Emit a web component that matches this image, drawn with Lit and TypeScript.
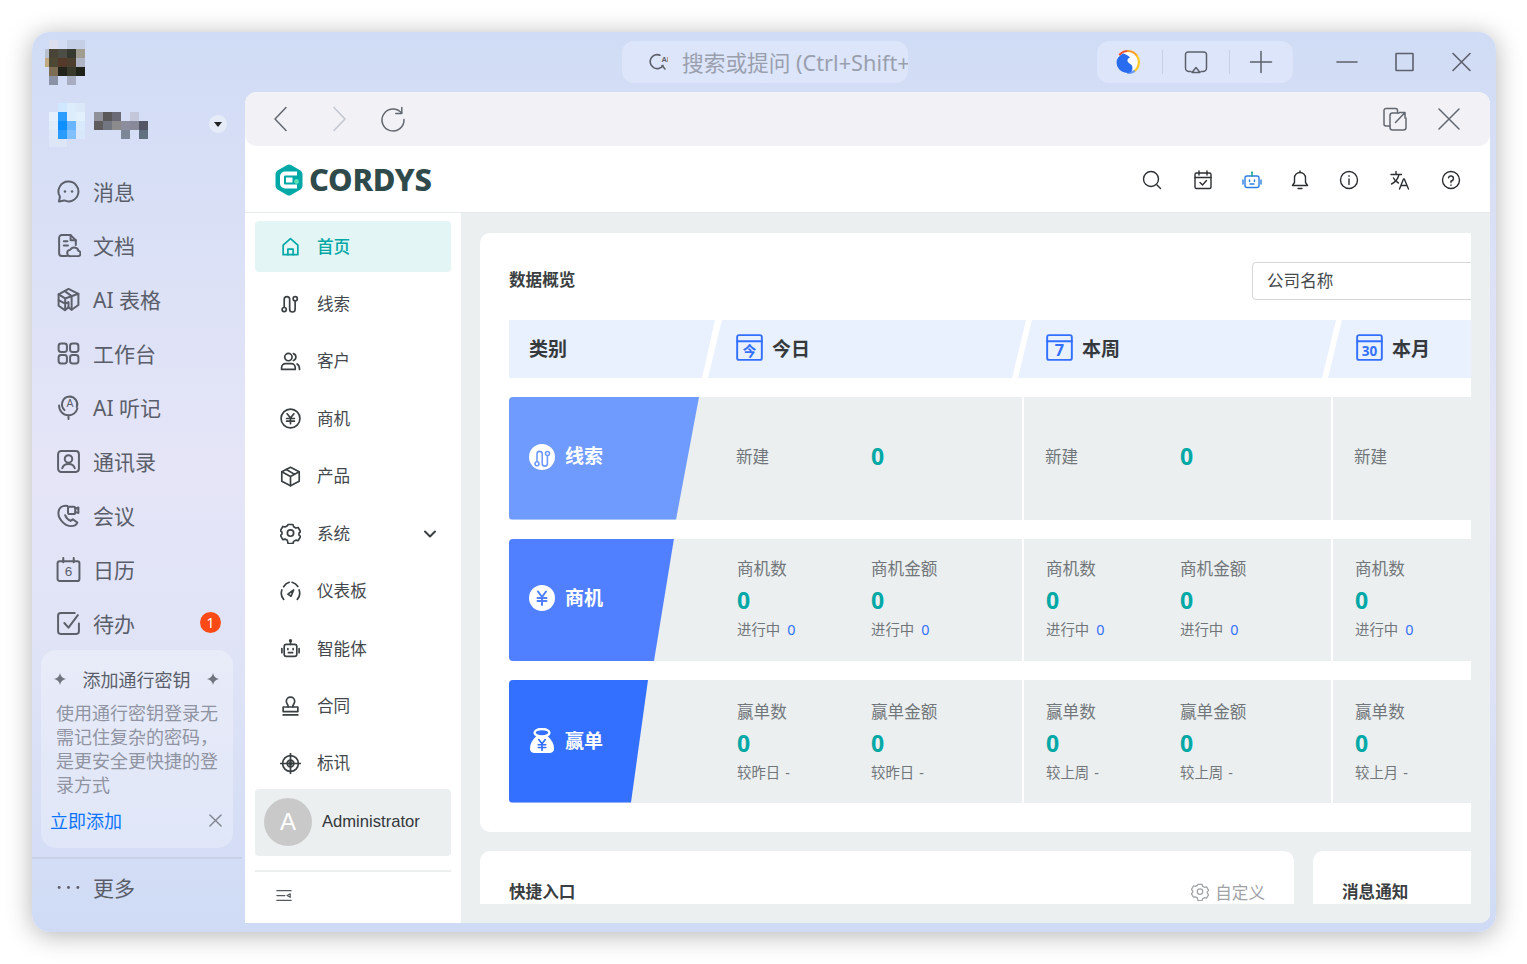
import { LitElement, html, css, svg, nothing } from 'lit';
import { customElement } from 'lit/decorators.js';

// stroke icons, 24 box for the left rail, 20 box for the app menu
const rail: Record<string, unknown> = {
  msg: svg`<path d="M12 2.5a9.5 9.5 0 1 1-4 18.1l-5.2 1 1-4.6A9.5 9.5 0 0 1 12 2.5z"/><circle cx="8.6" cy="12" r="1.2" fill="currentColor" stroke="none"/><circle cx="15.4" cy="12" r="1.2" fill="currentColor" stroke="none"/>`,
  doc: svg`<path d="M10.5 22H5.5A2.5 2.5 0 0 1 3 19.5v-15A2.5 2.5 0 0 1 5.5 2H14l5 5v4.5"/><path d="M14 2v5h5M7.5 8h3.5M7.5 12h4"/><path d="M14 22.2a3 3 0 0 1-.4-6 4.3 4.3 0 0 1 8 1 2.6 2.6 0 0 1 .1 5z"/>`,
  table: svg`<path d="M12 1.8 21.5 6.5v10.8L15 21.8l-3-2.2-3.5 2.6L2.5 18V7z"/><path d="M2.5 7 8.8 11v11M8.8 11l12.7-4.5M15 8.8v13M8.5 4l6.5 4.8M2.5 12.5l6.3 3.5 3.2-1.5v5"/>`,
  work: svg`<rect x="2.5" y="2.5" width="8" height="8" rx="2.4"/><rect x="13.5" y="2.5" width="8" height="8" rx="2.4"/><rect x="2.5" y="13.5" width="8" height="8" rx="2.4"/><rect x="13.5" y="13.5" width="8" height="8" rx="2.4"/>`,
  asr: svg`<path d="M8.2 14.5A7.5 7.5 0 0 1 13 1.5a7.5 7.5 0 0 1 7 10"/><path d="M3 10a9 9 0 0 0 9 9.5 8.8 8.8 0 0 0 8.5-6.5M12 19.5V23"/><text x="13.5" y="11.5" font-size="10" font-family="Liberation Sans" text-anchor="middle" fill="currentColor" stroke="none">A</text>`,
  contact: svg`<rect x="2" y="2" width="20" height="20" rx="3"/><circle cx="12" cy="9.5" r="3.6"/><path d="M6 18.5c.8-2.6 3-4 6-4s5.2 1.4 6 4"/>`,
  meet: svg`<path d="M11 2.8C6.5 1.8 2.3 4.5 2.3 9.5c0 6 6.2 12.7 12.2 12.7 2.5 0 5.2-1.2 6-3.500l-4.300-3-2.200 1.500c-2-.8-4.500-3.500-5.200-5.500"/><rect x="11.500" y="3.500" width="7" height="7" rx="1.500"/><path d="m18.500 5.500 3-1.200v5.400l-3-1.200"/>`,
  cal: svg`<rect x="1.5" y="4" width="21" height="19" rx="2"/><path d="M7 1v4M17 1v4"/><text x="12" y="18.500" font-size="13" font-family="Liberation Sans" text-anchor="middle" fill="currentColor" stroke="none">6</text>`,
  todo: svg`<path d="M22 12v7.500a2.500 2.500 0 0 1-2.500 2.500h-15A2.500 2.500 0 0 1 2 19.500v-15A2.500 2.500 0 0 1 4.500 2H18"/><path d="m8 11.500 4 4.500 9-12"/>`,
  more: svg`<circle cx="3" cy="12" r="1.4" fill="currentColor" stroke="none"/><circle cx="12" cy="12" r="1.4" fill="currentColor" stroke="none"/><circle cx="21" cy="12" r="1.4" fill="currentColor" stroke="none"/>`,
};

const gear = svg`<path d="M7.7 1.800h4.600l.7 2.200 2.100 1.200 2.200-.5 2.300 4-1.500 1.300v1.900l1.500 1.300-2.300 4-2.200-.5-2.100 1.200-.7 2.200H7.700L7 16.900l-2.100-1.200-2.200.5-2.300-4L1.900 10.900V9L.4 7.700l2.300-4 2.200.5L7 3z" transform="translate(0 -.4)"/><circle cx="10" cy="9.6" r="3"/>`;
const clue = svg`<path d="M4 13.500V6a2.600 2.600 0 0 1 5.200 0v9.500a2.600 2.600 0 0 0 5.200 0V8"/><circle cx="4" cy="15.800" r="2"/><circle cx="14.500" cy="5.500" r="2"/>`;

const menu: Record<string, unknown> = {
  home: svg`<path d="M3 8.800 10 2.500l7 6.300v9H3z"/><path d="M7.500 17.800v-5.300h5v5.300"/>`,
  clue,
  customer: svg`<circle cx="8" cy="5.800" r="3.500"/><path d="M1.500 17.500v-1.800A3.700 3.700 0 0 1 5.200 12h5.600a3.700 3.700 0 0 1 3.700 3.700v1.800z"/><path d="M12.800 2.500a3.500 3.500 0 0 1 0 6.600M16.300 12.300c1.500.8 2.300 2.300 2.300 5.200"/>`,
  money: svg`<circle cx="10" cy="10" r="9"/><path d="M6.800 5.500 10 9.500l3.200-4M6.300 10h7.400M6.300 12.500h7.400M10 9.500V15"/>`,
  product: svg`<path d="M10 1.300 18.300 5.500v9L10 18.700l-8.300-4.200v-9z"/><path d="M1.700 5.500 10 10l8.300-4.500M10 10v8.700M6 3.300 14 8"/>`,
  setting: gear,
  dash: svg`<path d="M3.500 17.500A9 9 0 0 1 1.800 8.500M3.500 5.500A9 9 0 0 1 8.800 1.200M11.500 1.200a9 9 0 0 1 5.500 4M18.200 8.500a9 9 0 0 1-1.700 9"/><path d="m7.500 12.500 5.500-4-2.500 6z"/>`,
  agent: svg`<rect x="4" y="6" width="12" height="11.500" rx="2"/><path d="M10 6V3.500M1.800 10v4M18.200 10v4M7.500 10v1M12.500 10v1M8 14h4"/><circle cx="10" cy="2.500" r=".8"/>`,
  contract: svg`<path d="M7.800 10.500c.4-2.200-1.800-3-1.800-5.500a4 4 0 0 1 8 0c0 2.500-2.200 3.300-1.800 5.500"/><path d="M3 10.500h14v4.300H3zM3 18h14"/>`,
  tender: svg`<circle cx="10" cy="10" r="7.500"/><circle cx="10" cy="10" r="3.200"/><path d="M10 0v20M0 10h20"/><circle cx="10" cy="10" r="1.300" fill="currentColor"/>`,
};

const dateIcon = (label: string, size: number) => html`<svg class="dicon" viewBox="0 0 28 28">
  <rect x="1.2" y="1.2" width="25.6" height="25.6" rx="2"/><path d="M1.2 7.500h25.600"/>
  <text x="14" y="23" font-size=${size} font-weight="700" text-anchor="middle">${label}</text>
</svg>`;

const mosaic = (rows: string[][], cell: number, offset = 0) =>
  rows.map((row, y) =>
    row.map((fill, x) =>
      fill
        ? svg`<rect x=${x * cell + offset} y=${y * cell} width=${cell} height=${cell} fill=${fill}/>`
        : nothing,
    ),
  );

const LOGO = [
  ['', '#dcdfee', '#d2ddf4', '#c5cfe5', '#c5cfe5'],
  ['#b8c0d0', '#4a4436', '#4c4d44', '#35392f', '#a09d90'],
  ['#c0a880', '#4d4833', '#55392a', '#4c3f2d', '#b0b5c5'],
  ['', '#7d6d55', '#22231b', '#3a3a2c', '#1e2218'],
  ['', '#8a93a5', '', '#a8aec2', ''],
];
const AVATAR = [
  ['', '#cfe8ff', '#dcecfa', '#dae8f8'],
  ['#e6f0fc', '#2a9dff', '#dcedfc', '#e2f0fd'],
  ['#e0ecfa', '#0d8fff', '#69b5ff', '#d8eafb'],
  ['#dfe8f8', '#2a9cff', '#80c0ff', '#d8e8fa'],
  ['#dde6f6', '#dde6f6', '', ''],
];
const NAME = [
  ['#8f9099', '#5a5858', '#6a6a76', '', '#c4c6da', ''],
  ['#5e5c5c', '#727680', '#8b8b8b', '#8c8e9e', '#888a9a', '#545668'],
  ['', '', '', '#7c8898', '', '#607080'],
];

const RAIL = [
  ['msg', '消息'], ['doc', '文档'], ['table', 'AI 表格'], ['work', '工作台'], ['asr', 'AI 听记'],
  ['contact', '通讯录'], ['meet', '会议'], ['cal', '日历'], ['todo', '待办'],
];
const MENU = [
  ['home', '首页'], ['clue', '线索'], ['customer', '客户'], ['money', '商机'], ['product', '产品'],
  ['setting', '系统'], ['dash', '仪表板'], ['agent', '智能体'], ['contract', '合同'], ['tender', '标讯'],
];

const statPair = (a: string, b: string, sub: string, valueBlue: boolean) => html`
  <div class="stat"><span>${a}</span><b>0</b><small>${sub}<i class=${valueBlue ? 'num' : ''}>${valueBlue ? '0' : '-'}</i></small></div>
  <div class="stat"><span>${b}</span><b>0</b><small>${sub}<i class=${valueBlue ? 'num' : ''}>${valueBlue ? '0' : '-'}</i></small></div>`;
const newOnly = html`<div class="single"><span>新建</span><b>0</b></div>`;

@customElement('app-root')
export class AppRoot extends LitElement {
  static styles = css`
    :host {
      display: block;
      height: 964px;
      box-sizing: border-box;
      padding: 32px 31px 32px 32px;
      background: #fff;
      font-family: 'Noto Sans', 'Noto Sans CJK SC', sans-serif;
      overflow: hidden;
    }
    * { box-sizing: border-box; }
    svg { display: block; flex: none; fill: none; stroke: currentColor; stroke-linecap: round; stroke-linejoin: round; }
    .flat { stroke: none; }
    .window {
      height: 900px;
      display: flex;
      border-radius: 18px;
      background: linear-gradient(#d0dcf5 0%, #e5e5f7 48%, #dfe3f6 70%, #cfdbf5 100%);
      box-shadow: 0 3px 26px rgba(0, 0, 0, 0.3);
      overflow: hidden;
    }
    .rail { width: 213px; flex: none; display: flex; flex-direction: column; }
    .rail-logo { padding: 8px 0 0 13px; height: 71px; }
    .org { display: flex; align-items: flex-start; height: 61px; padding-left: 17px; }
    .org .name { margin: 9px 0 0 9px; }
    .org .caret {
      width: 18px; height: 18px; margin: 12px 18px 0 auto; border-radius: 50%;
      background: #e6ebf8; display: flex; align-items: center; justify-content: center;
    }
    .org .caret::after { content: ''; border: 4px solid transparent; border-top: 5px solid #222; border-bottom: 0; }
    .rail-nav { display: flex; flex-direction: column; }
    .rail-item {
      height: 54px; display: flex; align-items: center; padding-left: 24px; gap: 12px;
      font-size: 21px; color: #5a5e6a; position: relative;
    }
    .rail-item svg { width: 25px; height: 25px; stroke-width: 1.9; color: #5c606b; }
    .badge {
      position: absolute; right: 24px; top: 16px; width: 21px; height: 21px; border-radius: 50%;
      background: #fb4a15; color: #fff; font-size: 14px; display: flex; align-items: center; justify-content: center;
    }
    .pass {
      margin: 0 12px 0 9px; height: 198px; padding: 15px 14px 0 15px; border-radius: 15px;
      background: rgba(255, 255, 255, 0.28); font-size: 18px;
    }
    .pass-title { display: flex; align-items: center; justify-content: space-between; margin-left: -2px; color: #5a5e6a; height: 28px; }
    .pass-title svg { width: 12px; height: 12px; fill: #70747f; stroke: none; }
    .pass p { margin: 8px 0 0; line-height: 24px; color: #9094a2; }
    .pass-foot { display: flex; justify-content: space-between; align-items: center; margin: 10px -3px 0 -6px; color: #0a74ff; }
    .pass-foot svg { width: 13px; height: 13px; color: #80858f; stroke-width: 1.5; }
    .rail-more { margin: 9px 3px 0 0; border-top: 2px solid #c8d1e7; }
    .rail-more .rail-item { height: 56px; }
    .main { flex: 1; min-width: 0; display: flex; flex-direction: column; padding: 0 6px 9px 0; }
    .titlebar { height: 60px; flex: none; display: flex; align-items: center; }
    .search {
      width: 286px; height: 42px; margin-left: 377px; border-radius: 12px; background: #dce5fa; overflow: hidden;
      display: flex; align-items: center; padding-left: 26px; gap: 14px; color: #9a9fae; font-size: 21.7px; white-space: nowrap;
    }
    .search span { padding-bottom: 2px; }
    .search svg { width: 20px; height: 20px; color: #5c606b; stroke-width: 1.6; }
    .pill {
      width: 196px; height: 42px; margin-left: 189px; border-radius: 12px; background: #dce5fa;
      display: grid; grid-template-columns: 65px 1px 66px 1px 63px; align-items: center; justify-items: center;
      color: #5c606b;
    }
    .pill hr { width: 1px; height: 24px; border: 0; margin: 0; background: #c6d0e6; }
    .pill svg { width: 26px; height: 26px; stroke-width: 1.5; }
    .pill .swirl { margin-right: 3px; stroke: none; }
    .pill .screen { margin-right: 1px; }
    .pill .plus { margin-right: 2px; }
    .winbtns { display: grid; grid-template-columns: repeat(3, 57px); justify-items: center; margin-left: 25px; color: #5c606b; }
    .winbtns svg { width: 22px; height: 22px; stroke-width: 1.6; }
    .panel { flex: 1; min-height: 0; display: flex; flex-direction: column; background: #fff; border-radius: 12px 12px 10px 0; overflow: hidden; }
    .toolbar { height: 54px; flex: none; background: #f1f1f6; border-radius: 12px; display: flex; align-items: center; padding: 0 27px 0 22px; color: #63676f; }
    .toolbar svg { width: 28px; height: 28px; stroke-width: 1.5; }
    .toolbar .off { color: #c3c6cf; margin-left: 30px; }
    .toolbar .reload { margin-left: 26px; }
    .toolbar .right { margin-left: auto; display: flex; gap: 26px; }
    .brandbar { height: 67px; flex: none; display: flex; align-items: center; padding: 1px 0 0 29px; border-bottom: 1px solid #e6eaeb; }
    .brand { display: flex; align-items: center; gap: 5px; font-weight: 800; font-size: 31px; letter-spacing: -0.3px; color: #2f4a4b; line-height: 1; }
    .brand svg { width: 30px; height: 32px; stroke: none; }
    .hicons { margin-left: auto; display: grid; grid-template-columns: 52px 50.5px 48px 48px 50px 51px 51px; justify-items: center; padding: 1px 14px 0 0; color: #2c2f33; }
    .hicons svg { width: 20px; height: 20px; stroke-width: 1.4; }
    .body { flex: 1; min-height: 0; display: flex; }
    .menu { width: 216px; flex: none; display: flex; flex-direction: column; padding: 8px 10px 0; }
    .menu-list { display: flex; flex-direction: column; gap: 6.44px; }
    .menu-item { height: 51px; display: flex; align-items: center; padding: 0 0 2px 25px; gap: 16px; font-size: 16.6px; color: #44484c; border-radius: 4px; }
    .menu-item svg { width: 21px; height: 21px; stroke-width: 1.6; color: #3a3f42; margin-top: 2px; }
    .menu-item.on { background: #e3f5f5; color: #00a8a6; font-weight: 500; }
    .menu-item.on svg { color: #00a8a6; }
    .menu-item .chev { margin-left: auto; margin-right: 14px; width: 14px; height: 14px; stroke-width: 2; }
    .user { height: 67px; border-radius: 4px; background: #ebeff0; display: flex; align-items: center; padding-left: 9px; gap: 10px; font: 16.6px 'Liberation Sans', sans-serif; color: #33373a; }
    .user .avatar { width: 48px; height: 48px; border-radius: 50%; background: #c9c9c9; color: #fff; font-size: 24px; display: flex; align-items: center; justify-content: center; }
    .collapse { margin-top: 14px; border-top: 2px solid #ebeff0; padding: 16px 0 0 21px; color: #55595c; }
    .collapse svg { width: 16px; height: 16px; stroke-width: 1.4; }
    .content { flex: 1; min-width: 0; background: #ebeff0; padding: 20px 19px 19px; display: flex; }
    .viewport { flex: 1; min-width: 0; overflow: hidden; }
    .sheet { width: 1189px; display: flex; flex-direction: column; gap: 19px; }
    .card { background: #fff; border-radius: 10px; padding: 29px; }
    .card-head { display: flex; align-items: center; justify-content: space-between; height: 38px; margin-bottom: 20px; }
    .card-head h2 { padding-bottom: 2px; box-sizing: content-box; }
    h2 { margin: 0; font-size: 16.6px; font-weight: 700; color: #3b3f42; line-height: 24px; }
    .company { width: 388px; height: 38px; border: 1px solid #d6d6d6; border-radius: 4px; padding: 0 14px 2px; display: flex; align-items: center; font-size: 16.6px; color: #45494c; }
    .thead { display: flex; height: 58px; font-size: 19px; font-weight: 700; color: #35393c; }
    .th { background: #e9f0fe; display: flex; align-items: center; gap: 9px; flex: none; clip-path: polygon(14px 0, 100% 0, calc(100% - 14px) 100%, 0 100%); width: 318px; margin-left: -8px; padding: 0 0 3px 28px; }
    .th.first { width: 206px; margin-left: 0; padding-left: 20px; clip-path: polygon(0 0, 100% 0, calc(100% - 13px) 100%, 0 100%); }
    .th.today { margin-left: -7px; }
    .dicon { width: 27px; height: 27px; color: #3370ff; stroke-width: 2; }
    .dicon text { font-family: 'Noto Sans', 'Noto Sans CJK SC', sans-serif; fill: #3370ff; stroke: none; }
    .rows { display: flex; flex-direction: column; gap: 19px; margin-top: 19px; }
    .row { display: flex; gap: 2px; height: 122.5px; }
    .row.won-row .stat { padding-top: 2px; }
    .cell { background: #ebeff0; width: 307px; flex: none; padding-left: 22px; display: grid; grid-template-columns: 134px 134px; align-items: center; }
    .cell.lead { width: 513px; padding-left: 0; border-radius: 4px 0 0 4px; display: flex; align-items: stretch; overflow: hidden; }
    .tag { display: flex; align-items: center; gap: 10px; padding-left: 20px; color: #fff; font-size: 19px; font-weight: 700; padding-bottom: 3px; }
    .tag svg { width: 26px; height: 26px; }
    .tag span { padding-bottom: 3px; }
    .tag.clue { width: 190px; background: #6f9bff; clip-path: polygon(0 0, 100% 0, 167px 100%, 0 100%); }
    .tag.biz { width: 165px; background: #5080ff; clip-path: polygon(0 0, 100% 0, 145px 100%, 0 100%); }
    .tag.won { width: 139px; background: #3370ff; clip-path: polygon(0 0, 100% 0, 122px 100%, 0 100%); padding-bottom: 0; }
    .stats { margin-left: auto; width: 285px; display: grid; grid-template-columns: 134px 134px; align-items: center; }
    .stat { display: flex; flex-direction: column; align-items: flex-start; font-size: 16.6px; color: #71767a; padding-bottom: 1px; }
    .stat span { line-height: 24px; }
    b { font-family: 'Noto Sans', sans-serif; font-size: 23px; color: #00a8a6; font-weight: 700; }
    .stat b { line-height: 38px; }
    .stat small { font-size: 14.4px; line-height: 22px; }
    .stat i { font-style: normal; margin-left: 5px; }
    .stat i.num { color: #3370ff; margin-left: 7px; }
    .single { grid-column: 1 / 3; display: grid; grid-template-columns: 135px 1fr; align-items: center; font-size: 16.6px; color: #71767a; padding-bottom: 5px; margin-left: -1px; }
    .bottom { display: flex; gap: 19px; height: 53px; overflow: hidden; }
    .bottom .card { height: 80px; }
    .quick { width: 814px; flex: none; }
    .msgs { flex: 1; }
    .quick-head { display: flex; justify-content: space-between; }
    .custom { display: flex; align-items: center; gap: 6px; font-size: 16.6px; color: #a0a3a6; }
    .custom svg { width: 18px; height: 18px; stroke-width: 1.4; }
  `;

  render() {
    return html`<div class="window">
      <aside class="rail">
        <div class="rail-logo"><svg class="flat" width="40" height="45" viewBox="0 0 40 45" shape-rendering="crispEdges">${mosaic(LOGO, 9, -5)}</svg></div>
        <div class="org">
          <svg class="flat" width="36" height="44" viewBox="0 0 36 44" shape-rendering="crispEdges">${mosaic(AVATAR, 9)}</svg>
          <svg class="flat name" width="54" height="27" viewBox="0 0 54 27" shape-rendering="crispEdges">${mosaic(NAME, 9)}</svg>
          <span class="caret"></span>
        </div>
        <nav class="rail-nav">
          ${RAIL.map(([k, t]) => html`<div class="rail-item"><svg viewBox="0 0 24 24">${rail[k]}</svg>${t}${k === 'todo' ? html`<span class="badge">1</span>` : nothing}</div>`)}
        </nav>
        <section class="pass">
          <div class="pass-title">
            <svg viewBox="0 0 12 12"><path d="M6 0c.6 3.4 2.6 5.4 6 6-3.4.6-5.4 2.6-6 6-.6-3.4-2.6-5.4-6-6 3.4-.6 5.4-2.6 6-6z"/></svg>
            添加通行密钥
            <svg viewBox="0 0 12 12"><path d="M6 0c.6 3.4 2.6 5.4 6 6-3.4.6-5.4 2.6-6 6-.6-3.4-2.6-5.4-6-6 3.4-.6 5.4-2.6 6-6z"/></svg>
          </div>
          <p>使用通行密钥登录无需记住复杂的密码，是更安全更快捷的登录方式</p>
          <div class="pass-foot">立即添加<svg viewBox="0 0 14 14"><path d="m1 1 12 12M13 1 1 13"/></svg></div>
        </section>
        <div class="rail-more"><div class="rail-item"><svg viewBox="0 0 24 24">${rail.more}</svg>更多</div></div>
      </aside>

      <div class="main">
        <header class="titlebar">
          <div class="search">
            <svg viewBox="0 0 20 20"><path d="M12 3.2A7 7 0 1 0 15 13.5M14 13.5l3 3.5"/><text x="13.5" y="10" font-size="7.5" font-weight="700" font-family="Liberation Sans" fill="currentColor" stroke="none">AI</text></svg>
            <span>搜索或提问 (Ctrl+Shift+</span>
          </div>
          <div class="pill">
            <svg class="swirl" viewBox="0 0 26 26">
              <circle cx="13" cy="13" r="11.5" fill="#fff"/>
              <path d="M4.8 5.5A11 11 0 0 1 13 2" fill="none" style="stroke:#f0552a" stroke-width="2.2"/>
              <path d="M13 2A11 11 0 0 1 22 7" fill="none" style="stroke:#ff9a1f" stroke-width="2.2"/>
              <path d="M22 7A11 11 0 0 1 19 22.3" fill="none" style="stroke:#ffc928" stroke-width="2.2"/>
              <path d="M19 22.3A11 11 0 0 1 13 24" fill="none" style="stroke:#6b9cf5" stroke-width="2.2"/>
              <path d="M8 4.5C3.5 7 1.5 10 1.5 13c0 6.5 5 11 11.5 11 3.5 0 5-3.500 4.300-6.500-.7-2.800-4.300-3-4.800-5.500-.3-2 1-3 2.500-3.300-1-1.500-3-2.800-6.500-4.200z" fill="#2a6cf0"/>
            </svg>
            <hr />
            <svg class="screen" viewBox="0 0 26 26"><path d="M8 22.5H6A3.5 3.5 0 0 1 2.500 19V5.500A2.500 2.500 0 0 1 5 3h16a2.500 2.500 0 0 1 2.500 2.500V19a3.500 3.500 0 0 1-3.500 3.500h-2"/><path d="M13 18.500l4 5H9z"/></svg>
            <hr />
            <svg class="plus" viewBox="0 0 26 26"><path d="M13 2.5v21M2.5 13h21"/></svg>
          </div>
          <div class="winbtns">
            <svg viewBox="0 0 22 22"><path d="M1 11h20"/></svg>
            <svg viewBox="0 0 22 22"><rect x="3" y="2.5" width="17" height="17" rx=".5"/></svg>
            <svg viewBox="0 0 22 22"><path d="m3 2.500 17 17M20 2.500l-17 17"/></svg>
          </div>
        </header>

        <div class="panel">
          <div class="toolbar">
            <svg viewBox="0 0 28 28"><path d="M19 2.5 8 14l11 11.500"/></svg>
            <svg class="off" viewBox="0 0 28 28"><path d="M9 2.5 20 14 9 25.500"/></svg>
            <svg class="reload" viewBox="0 0 28 28"><path d="M22.500 8A11 11 0 1 0 25 14.500"/><path d="M22.800 2.500v6h-6"/></svg>
            <div class="right">
              <svg viewBox="0 0 28 28"><path d="M9 21H5a2 2 0 0 1-2-2V5.500a2 2 0 0 1 2-2h9.500a2 2 0 0 1 2 2V8"/><path d="M25 13v9.500a2.500 2.500 0 0 1-2.500 2.500H11.500A2.500 2.500 0 0 1 9 22.500v-12A2.500 2.500 0 0 1 11.500 8H18"/><path d="m14.500 17.500 9-9.500M18.500 7.500h5.500V13"/></svg>
              <svg viewBox="0 0 28 28"><path d="m4 4 20 20M24 4 4 24"/></svg>
            </div>
          </div>

          <div class="brandbar">
            <div class="brand">
              <svg viewBox="0 0 30 32">
                <path d="M13 1.100a4 4 0 0 1 4 0l9.500 5.500a4 4 0 0 1 2 3.400v12a4 4 0 0 1-2 3.400L17 30.900a4 4 0 0 1-4 0L3.500 25.400a4 4 0 0 1-2-3.400V10a4 4 0 0 1 2-3.400z" fill="#00a8a6"/>
                <path d="M23 9.500H11a3 3 0 0 0-3 3v7a3 3 0 0 0 3 3h12" fill="none" style="stroke:#fff" stroke-width="4" stroke-linecap="butt"/>
                <path d="M12 13.500h6.500v5H12z" fill="#fff"/>
                <circle cx="22.5" cy="17.5" r="2.4" fill="#5ce0b8"/>
              </svg>
              <span>CORDYS</span>
            </div>
            <div class="hicons">
              <svg viewBox="0 0 20 20"><circle cx="9" cy="9" r="7.5"/><path d="m15 15 3.500 3.500"/></svg>
              <svg viewBox="0 0 20 20"><rect x="2" y="3" width="16" height="15.5" rx="1.5"/><path d="M2 7.500h16M6 1v4M14 1v4M7 12.500l2.500 2.500 4-4.500"/></svg>
              <svg viewBox="0 0 20 20"><rect x="3" y="6" width="14" height="11.5" rx="2" style="stroke:#2b7fe0"/><path d="M10 6V2.500" style="stroke:#12a98a"/><circle cx="10" cy="2.5" r="1" fill="#12a98a" style="stroke:none"/><path d="M1 10v4M19 10v4M7.500 10v1.500M12.500 10v1.500M8 14h4" style="stroke:#2b7fe0"/></svg>
              <svg viewBox="0 0 20 20"><path d="M2.500 15.500h15l-2-3V8a5.500 5.500 0 0 0-11 0v4.500z"/><path d="M8 18.500h4M10 1v1.500"/></svg>
              <svg viewBox="0 0 20 20"><circle cx="10" cy="10" r="8.5"/><path d="M10 9v5.500M10 5.800v.4"/></svg>
              <svg viewBox="0 0 20 20"><path d="M1 4.500h10.500M6 1.500v3M9 4.500C8 9 5.500 12 1.500 14M3.500 8c1 2.300 3 4 5 5M9.500 19l4-10h.8l4.200 10M11 15.500h6"/></svg>
              <svg viewBox="0 0 20 20"><circle cx="10" cy="10" r="8.5"/><path d="M7.500 7.800A2.500 2.500 0 1 1 10 11v1.500M10 15v.3"/></svg>
            </div>
          </div>

          <div class="body">
            <aside class="menu">
              <nav class="menu-list">
                ${MENU.map(([k, t], i) => html`<div class="menu-item ${i === 0 ? 'on' : ''}"><svg viewBox="0 0 20 20">${menu[k]}</svg>${t}${k === 'setting' ? html`<svg class="chev" viewBox="0 0 14 14"><path d="m2 4.500 5 5 5-5"/></svg>` : nothing}</div>`)}
              </nav>
              <div class="user"><span class="avatar">A</span>Administrator</div>
              <div class="collapse"><svg viewBox="0 0 18 18"><path d="M1 3h16M1 8.500h9M1 14h16M16 6.500l-3.500 2 3.500 2z"/></svg></div>
            </aside>

            <main class="content">
              <div class="viewport">
                <div class="sheet">
                  <section class="card">
                    <div class="card-head"><h2>数据概览</h2><div class="company">公司名称</div></div>
                    <div class="thead">
                      <div class="th first">类别</div>
                      <div class="th today">${dateIcon('今', 14)}今日</div>
                      <div class="th">${dateIcon('7', 17)}本周</div>
                      <div class="th">${dateIcon('30', 14)}本月</div>
                    </div>
                    <div class="rows">
                      <div class="row">
                        <div class="cell lead">
                          <div class="tag clue"><svg class="flat" viewBox="0 0 26 26"><circle cx="13" cy="13" r="13" fill="#fff"/><g transform="translate(4 4)" style="stroke:#6f9bff" stroke-width="1.6">${clue}</g></svg><span>线索</span></div>
                          <div class="stats">${newOnly}</div>
                        </div>
                        <div class="cell">${newOnly}</div>
                        <div class="cell">${newOnly}</div>
                      </div>
                      <div class="row">
                        <div class="cell lead">
                          <div class="tag biz"><svg class="flat" viewBox="0 0 26 26"><circle cx="13" cy="13" r="13" fill="#fff"/><path d="M9 6.500 13 12l4-5.500M8.500 13h9M8.500 16h9M13 12v8" style="stroke:#5080ff" stroke-width="2"/></svg><span>商机</span></div>
                          <div class="stats">${statPair('商机数', '商机金额', '进行中', true)}</div>
                        </div>
                        <div class="cell">${statPair('商机数', '商机金额', '进行中', true)}</div>
                        <div class="cell">${statPair('商机数', '商机金额', '进行中', true)}</div>
                      </div>
                      <div class="row won-row">
                        <div class="cell lead">
                          <div class="tag won"><svg class="flat" viewBox="0 0 26 28"><path d="M7 8.500C2.500 12.500 0 17.500 0 22c0 3 2 5 5 5h16c3 0 5-2 5-5 0-4.500-2.500-9.500-7-13.500z" fill="#fff"/><ellipse cx="13" cy="5" rx="8" ry="4" style="stroke:#fff" stroke-width="2.6"/><path d="M9.500 12.500 13 17l3.500-4.500M9 18h8M9 21h8M13 17v7" style="stroke:#3370ff" stroke-width="1.8"/></svg><span>赢单</span></div>
                          <div class="stats">${statPair('赢单数', '赢单金额', '较昨日', false)}</div>
                        </div>
                        <div class="cell">${statPair('赢单数', '赢单金额', '较上周', false)}</div>
                        <div class="cell">${statPair('赢单数', '赢单金额', '较上月', false)}</div>
                      </div>
                    </div>
                  </section>
                  <div class="bottom">
                    <section class="card quick">
                      <div class="quick-head"><h2>快捷入口</h2><div class="custom"><svg viewBox="0 0 20 20">${gear}</svg>自定义</div></div>
                    </section>
                    <section class="card msgs"><h2>消息通知</h2></section>
                  </div>
                </div>
              </div>
            </main>
          </div>
        </div>
      </div>
    </div>`;
  }
}
